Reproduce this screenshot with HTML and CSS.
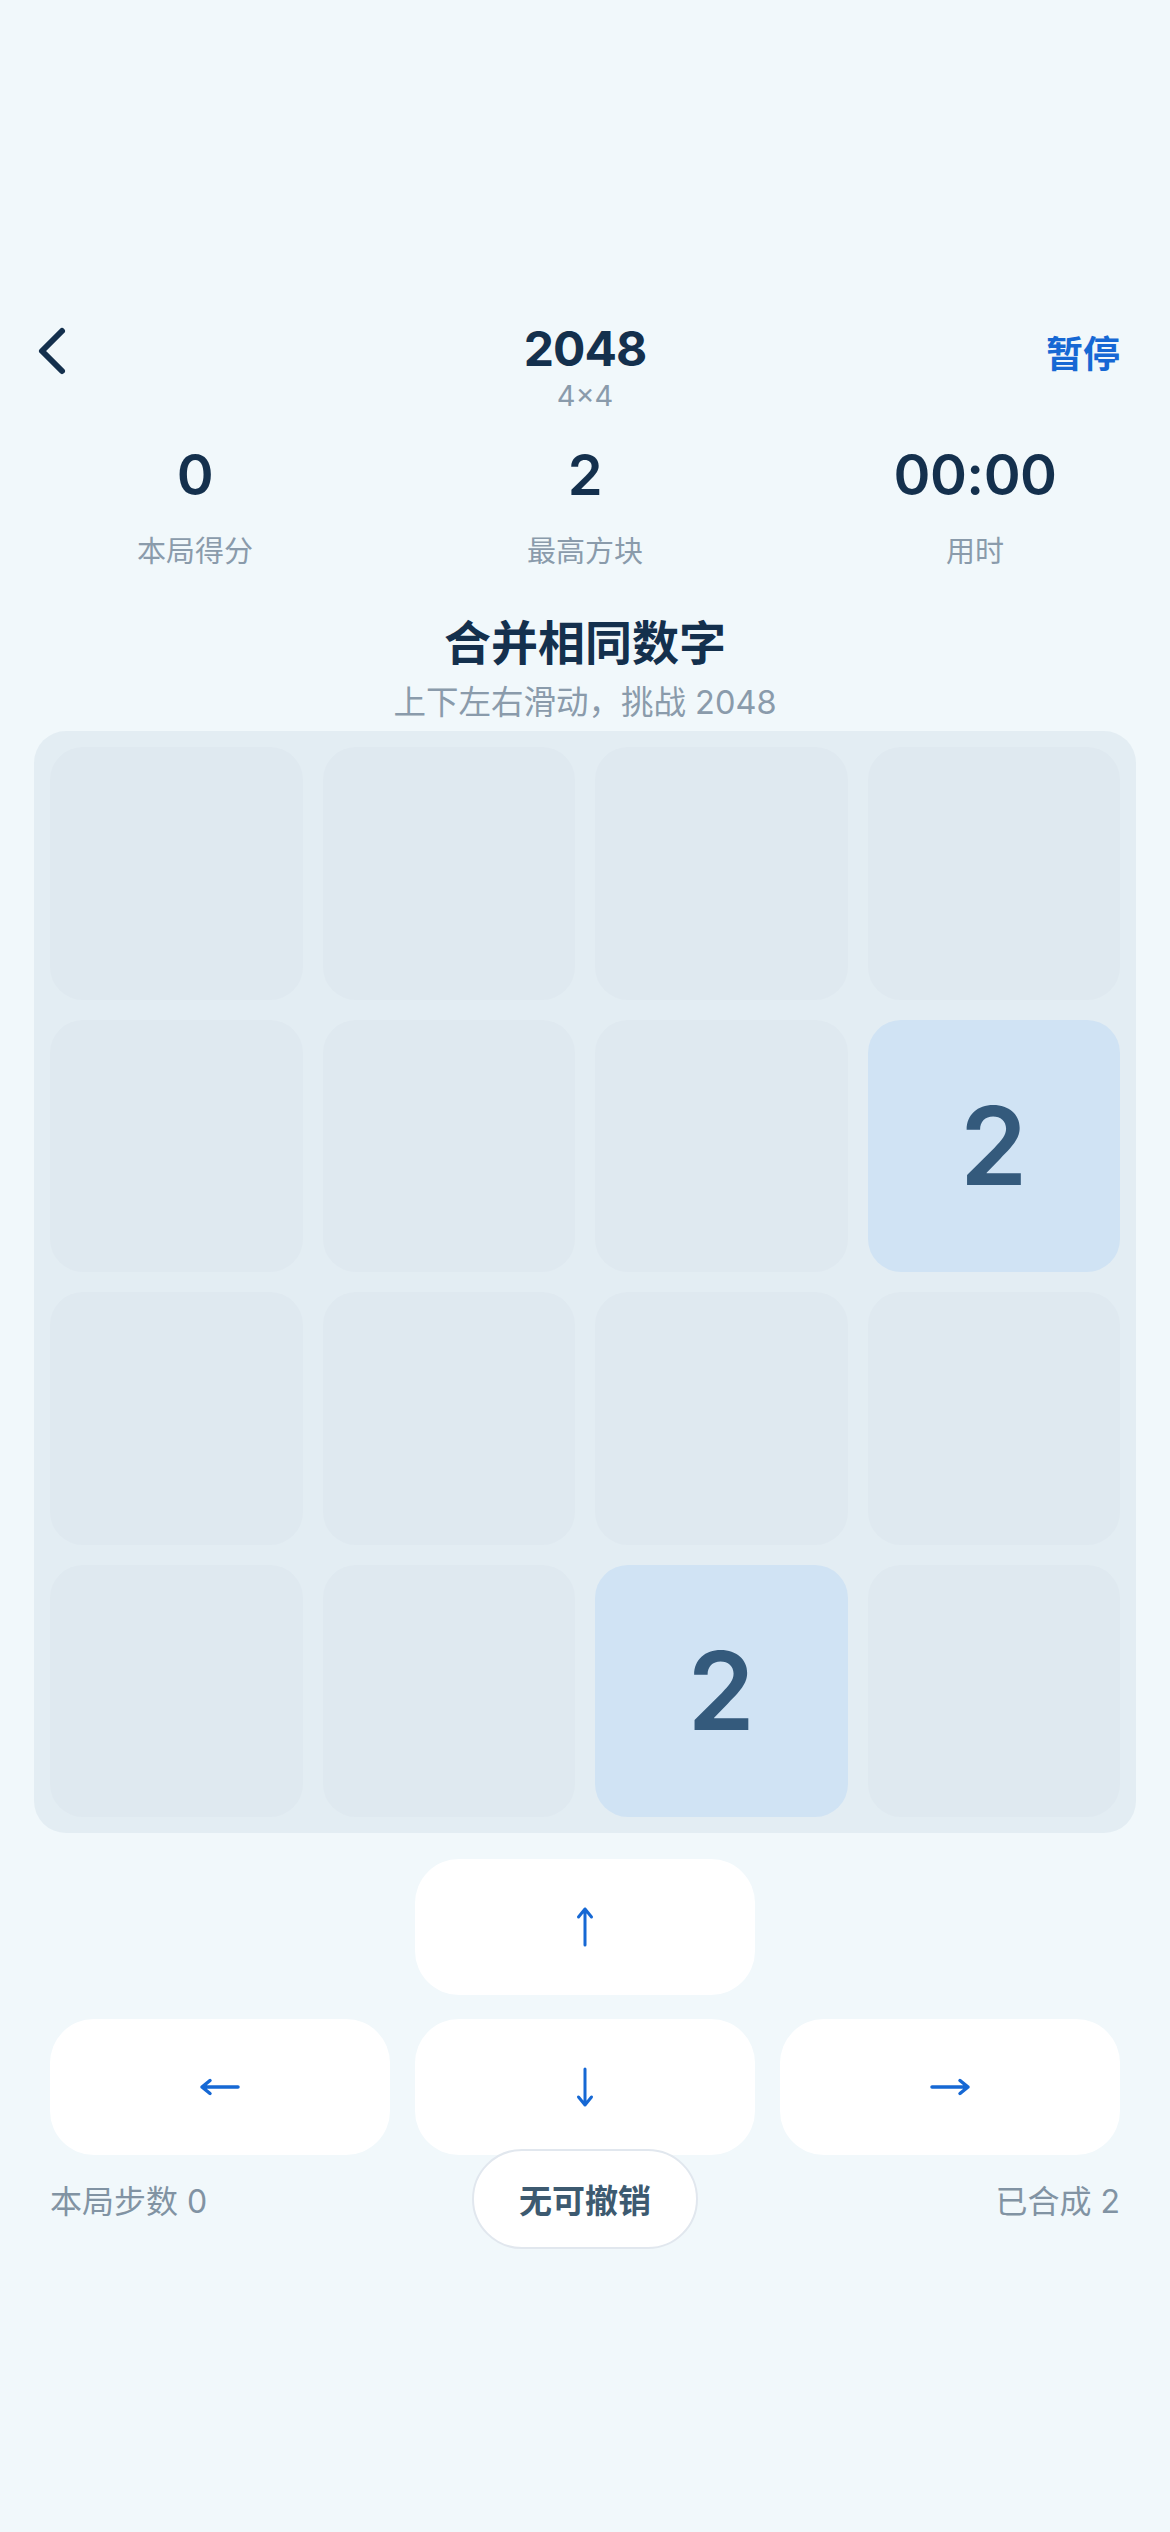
FILE: index.html
```html
<!DOCTYPE html>
<html lang="zh-CN">
<head>
    <meta charset="UTF-8">
    <meta name="viewport" content="width=device-width, initial-scale=1.0">
    <title>2048</title>
    <link rel="stylesheet" href="styles.css">
</head>
<body>

<div class="page">
    <header class="topbar">
        <button class="back-button" aria-label="返回">
            <svg width="40" height="56" viewBox="0 0 40 56">
                <path d="M26 8 L6 28 L26 48" fill="none" stroke="#14304d" stroke-width="6" stroke-linecap="round" stroke-linejoin="round"/>
            </svg>
        </button>
        <div class="title-block">
            <div class="title">2048</div>
            <div class="subtitle">4×4</div>
        </div>
        <button class="pause-button">暂停</button>
    </header>

    <section class="stats">
        <div class="stat">
            <div class="stat-value">0</div>
            <div class="stat-label">本局得分</div>
        </div>
        <div class="stat">
            <div class="stat-value">2</div>
            <div class="stat-label">最高方块</div>
        </div>
        <div class="stat">
            <div class="stat-value">00:00</div>
            <div class="stat-label">用时</div>
        </div>
    </section>

    <section class="intro">
        <h2>合并相同数字</h2>
        <p>上下左右滑动，挑战 2048</p>
    </section>

    <div class="board">
        <div class="tile"></div>
        <div class="tile"></div>
        <div class="tile"></div>
        <div class="tile"></div>

        <div class="tile"></div>
        <div class="tile"></div>
        <div class="tile"></div>
        <div class="tile tile-2">2</div>

        <div class="tile"></div>
        <div class="tile"></div>
        <div class="tile"></div>
        <div class="tile"></div>

        <div class="tile"></div>
        <div class="tile"></div>
        <div class="tile tile-2">2</div>
        <div class="tile"></div>
    </div>

    <div class="controls">
        <button class="dir-button up" aria-label="上">
            <svg width="44" height="44" viewBox="0 0 44 44">
                <path d="M22 40 V4 M15.5 12 L22 4 L28.5 12" fill="none" stroke="#1668d4" stroke-width="3" stroke-linecap="round" stroke-linejoin="round"/>
            </svg>
        </button>
        <button class="dir-button left" aria-label="左">
            <svg width="44" height="44" viewBox="0 0 44 44">
                <path d="M40 22 H4 M12 15.5 L4 22 L12 28.5" fill="none" stroke="#1668d4" stroke-width="3.5" stroke-linecap="round" stroke-linejoin="round"/>
            </svg>
        </button>
        <button class="dir-button down" aria-label="下">
            <svg width="44" height="44" viewBox="0 0 44 44">
                <path d="M22 4 V40 M15.5 32 L22 40 L28.5 32" fill="none" stroke="#1668d4" stroke-width="3" stroke-linecap="round" stroke-linejoin="round"/>
            </svg>
        </button>
        <button class="dir-button right" aria-label="右">
            <svg width="44" height="44" viewBox="0 0 44 44">
                <path d="M4 22 H40 M32 15.5 L40 22 L32 28.5" fill="none" stroke="#1668d4" stroke-width="3.5" stroke-linecap="round" stroke-linejoin="round"/>
            </svg>
        </button>
    </div>

    <div class="footer">
        <span class="footer-left">本局步数 0</span>
        <button class="undo-button">无可撤销</button>
        <span class="footer-right">已合成 2</span>
    </div>
</div>

</body>
</html>
```

FILE: styles.css
```css
body {
    margin: 0;
    background-color: #f1f8fb;
    font-family: Inter, "Noto Sans CJK SC", sans-serif;
    color: #14304d;
}
button {
    font-family: inherit;
    border: none;
    background: none;
    padding: 0;
    cursor: pointer;
}
.page {
    padding-top: 321px;
}

/* header */
.topbar {
    display: flex;
    align-items: flex-start;
    justify-content: space-between;
    padding: 0 50px 0 36px;
}
.back-button {
    width: 134px;
    height: 56px;
    display: flex;
    align-items: center;
    margin-top: 2px;
}
.title-block {
    text-align: center;
}
.title {
    font-size: 48px;
    font-weight: 700;
    line-height: 56px;
    letter-spacing: -1px;
}
.subtitle {
    margin-top: 2px;
    font-size: 29px;
    line-height: 34px;
    color: #8a9bab;
}
.pause-button {
    width: 120px;
    text-align: right;
    margin-top: 6px;
    font-size: 37px;
    font-weight: 700;
    line-height: 56px;
    color: #1668d4;
}

/* stats */
.stats {
    display: grid;
    grid-template-columns: repeat(3, 1fr);
    margin-top: 27px;
    text-align: center;
}
.stat-value {
    font-size: 56px;
    font-weight: 600;
    line-height: 70px;
    letter-spacing: -0.5px;
}
.stat-label {
    margin-top: 25px;
    font-size: 29px;
    line-height: 34px;
    color: #8a9bab;
}

/* intro */
.intro {
    text-align: center;
    margin-top: 46px;
}
.intro h2 {
    margin: 0;
    font-size: 47px;
    font-weight: 700;
    line-height: 56px;
}
.intro p {
    margin: 14px 0 0;
    font-size: 32.5px;
    line-height: 36px;
    color: #8a9bab;
}

/* board */
.board {
    display: grid;
    grid-template-columns: repeat(4, 1fr);
    gap: 20px;
    margin: 10px 34px 0;
    padding: 16px;
    background-color: #e3edf3;
    border-radius: 32px;
}
.tile {
    aspect-ratio: 1;
    border-radius: 33px;
    background-color: #dfe9f0;
    display: flex;
    align-items: center;
    justify-content: center;
    font-size: 108px;
    font-weight: 600;
    color: #345a7c;
}
.tile-2 {
    background-color: #d0e3f4;
}

/* direction buttons */
.controls {
    display: grid;
    grid-template-columns: repeat(3, 1fr);
    column-gap: 25px;
    row-gap: 24px;
    margin-top: 26px;
    padding: 0 50px;
}
.dir-button {
    height: 136px;
    background-color: #ffffff;
    border-radius: 44px;
    display: flex;
    align-items: center;
    justify-content: center;
}
.dir-button.up {
    grid-column: 2;
}
.dir-button.left {
    grid-column: 1;
}

/* footer */
.footer {
    display: grid;
    grid-template-columns: 1fr auto 1fr;
    align-items: center;
    margin-top: -6px;
    padding: 0 50px;
    font-size: 32px;
    color: #8193a3;
}
.footer-right {
    text-align: right;
}
.undo-button {
    height: 100px;
    padding: 0 45px;
    background-color: #ffffff;
    border: 2px solid #e1e7ee;
    border-radius: 50px;
    font-size: 33px;
    font-weight: 700;
    color: #3d5a70;
}
```
